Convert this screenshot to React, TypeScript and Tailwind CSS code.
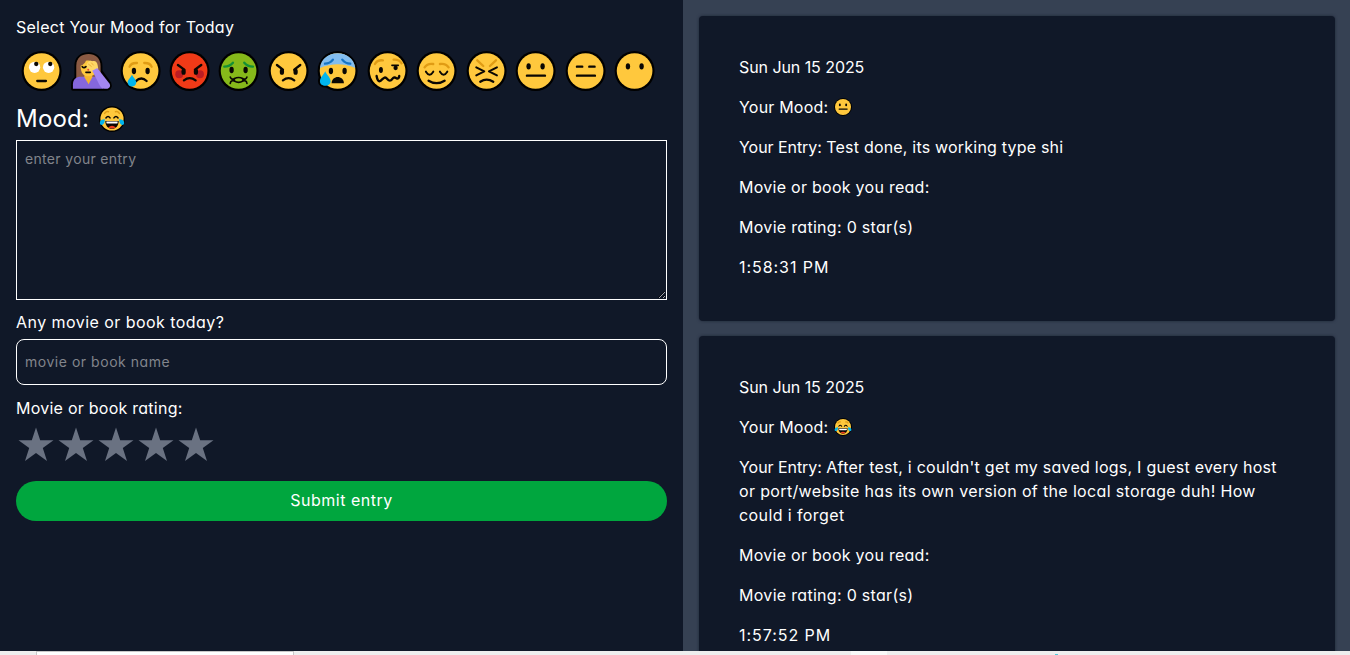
import { type ReactNode } from "react";

const INK = "#0a0703";
const BROW = "#e09c14";

function Face({ fill = "#ffc83d", children }: { fill?: string; children?: ReactNode }) {
  return (
    <>
      <circle cx="60" cy="60" r="60" fill="#000" />
      <circle cx="60" cy="60" r="53.5" fill={fill} />
      <g strokeLinecap="round" strokeLinejoin="round" fill="none" strokeWidth="7" stroke={INK}>
        {children}
      </g>
    </>
  );
}

function Eyes({ y, l = 40, r = 81 }: { y: number; l?: number; r?: number }) {
  return (
    <g fill={INK} stroke="none">
      <ellipse cx={l} cy={y} rx="6.5" ry="9.5" />
      <ellipse cx={r} cy={y} rx="6.5" ry="9.5" />
    </g>
  );
}

const drawings: Record<string, ReactNode> = {
  "rolling eyes": (
    <Face>
      <g stroke="none">
        <circle cx="39" cy="49" r="17" fill="#fff" />
        <circle cx="81" cy="49" r="17" fill="#fff" />
        <circle cx="44" cy="39" r="6.5" fill={INK} />
        <circle cx="86" cy="39" r="6.5" fill={INK} />
      </g>
      <path d="M47 90H73" strokeWidth="7" />
    </Face>
  ),
  facepalm: (
    <>
      <path
        d="M17 82V44C17 20 34 9 54 9S90 22 90 45V60L117 98C121 107 115 114 107 114H7V100C7 90 11 85 17 82Z"
        fill="#000"
        stroke="#000"
        strokeWidth="11"
        strokeLinejoin="round"
      />
      <path d="M17 82V44C17 20 34 9 54 9S90 22 90 45V86H17Z" fill="#8b5a43" />
      <path d="M7 113V100C7 85 17 77 30 77H76C90 77 98 86 98 100V113Z" fill="#8567dc" />
      <path d="M43 66H65V79L54 100L41 78Z" fill="#f5b52e" />
      <path d="M30 44C38 41 43 36 46 29C64 26 78 34 78 52C78 69 67 76 54 76S30 68 30 44Z" fill="#ffc83d" />
      <path d="M48 41C52 29 60 27 66 31C74 28 80 34 81 42L83 53L69 63C55 60 47 52 48 41Z" fill="#ffd766" />
      <path d="M65 59L80 51L117 98C121 106 116 113 108 113H102C96 113 91 109 88 104Z" fill="#a486f2" />
      <path d="M35 47Q40 53 46 47M46 64H59" fill="none" stroke={INK} strokeWidth="5" strokeLinecap="round" />
      <path d="M53 39L63 47M62 35L69 43" stroke="#eaa52f" strokeWidth="2.5" />
      <circle cx="53" cy="56" r="3" fill="#e6453b" />
    </>
  ),
  crying: (
    <Face>
      <path d="M27 47Q32 35 49 36M93 47Q88 35 71 36" stroke={BROW} />
      <Eyes y={60} />
      <path d="M45 91Q62 75 78 90" />
      <path d="M34 71C29 81 21 87 21 94C21 111 47 111 47 94C47 87 39 80 34 71Z" fill="#00b5ee" stroke="none" />
    </Face>
  ),
  furious: (
    <Face fill="#f03a17">
      <g fill="#bb1d23" stroke="none">
        <circle cx="29" cy="70" r="12" />
        <circle cx="91" cy="70" r="12" />
      </g>
      <path d="M25 42L44 56M95 42L76 56M43 88Q60 75 78 88" />
      <Eyes y={62} l={42} r={79} />
    </Face>
  ),
  nauseated: (
    <Face fill="#86b91a">
      <path d="M17 47Q34 46 43 35M103 47Q86 46 77 35" stroke="#139035" />
      <Eyes y={57} l={39} />
      <path
        d="M35 78Q38 87 47 83Q60 76 73 83Q82 87 85 78M35 97Q37 87 47 90Q60 98 73 90Q83 87 85 97M47 83V90M73 83V90"
        strokeWidth="5"
      />
    </Face>
  ),
  angry: (
    <Face>
      <path d="M25 42L43 56M95 42L77 56M43 88Q60 75 77 88" />
      <Eyes y={62} />
    </Face>
  ),
  anxious: (
    <>
      <path d="M23 52C17 67 4 76 4 91C4 112 42 112 42 91C42 76 29 67 23 52Z" fill="#000" stroke="#000" strokeWidth="6" />
      <Face>
        <path d="M7 51C10 23 33 6.500 60 6.500S110 23 113 51Q61 29 7 51Z" fill="#83bdee" stroke="none" />
        <path d="M22 38Q37 38 46 26M98 38Q83 38 74 26" stroke="#1674c4" />
        <Eyes y={60} />
        <path d="M42 97C43 72 78 72 79 97Z" fill={INK} stroke="none" />
        <path d="M23 61C17 73 7 80 7 91C7 109 39 109 39 91C39 80 28 73 23 61Z" fill="#00b5ee" stroke="none" />
      </Face>
    </>
  ),
  woozy: (
    <Face>
      <path d="M22 39Q29 26 46 28M78 26Q94 24 102 37" stroke={BROW} />
      <ellipse cx="40" cy="57" rx="6" ry="9" fill={INK} stroke="none" />
      <path d="M73 43H92" strokeWidth="5" />
      <circle cx="84" cy="51" r="6.500" fill={INK} stroke="none" />
      <path d="M27 75Q30 94 38 90C47 83 51 74 59 84Q67 94 74 84Q79 76 87 82Q94 84 95 75" />
    </Face>
  ),
  relieved: (
    <Face>
      <path d="M24 49Q33 36 50 39M96 49Q87 36 70 39" stroke={BROW} />
      <path d="M28 62Q39 80 50 62M70 62Q81 80 92 62" strokeWidth="6" />
      <path d="M36 89Q60 104 84 89" />
    </Face>
  ),
  persevering: (
    <Face>
      <path d="M32 28L50 45M88 28L70 45" stroke={BROW} />
      <path d="M29 49L53 61L29 73M91 49L67 61L91 73" strokeWidth="6" />
      <path d="M41 92Q60 80 80 92" />
    </Face>
  ),
  neutral: (
    <Face>
      <Eyes y={46} l={39} />
      <path d="M34 74H88" />
    </Face>
  ),
  expressionless: (
    <Face>
      <path d="M34 47H50M71 47H87M34 74H88" />
    </Face>
  ),
  speechless: (
    <Face>
      <Eyes y={46} />
    </Face>
  ),
  joy: (
    <Face>
      <path d="M26 34Q33 24 44 26M94 34Q87 24 76 26" stroke={BROW} />
      <path d="M32 55Q42 42 51 55M69 55Q78 42 88 55" strokeWidth="7" />
      <g stroke="none">
        <path d="M29 69H91C90 91 79 105 60 105S30 91 29 69Z" fill={INK} />
        <path d="M34 71H86V77Q85 81 81 81H39Q35 81 34 77Z" fill="#fff" />
        <path d="M42 99Q60 83 78 99Q60 109 42 99Z" fill="#ee3d1c" />
        <path d="M27 61C12 61 4 67 4 77C4 94 27 91 27 61Z" fill="#00b5ee" />
        <path d="M93 61C108 61 116 67 116 77C116 94 93 91 93 61Z" fill="#00b5ee" />
      </g>
    </Face>
  ),
};

const moods = [
  "rolling eyes",
  "facepalm",
  "crying",
  "furious",
  "nauseated",
  "angry",
  "anxious",
  "woozy",
  "relieved",
  "persevering",
  "neutral",
  "expressionless",
  "speechless",
];

function Emoji({ name, className }: { name: string; className: string }) {
  return (
    <svg viewBox="0 0 120 120" className={`shrink-0 overflow-visible ${className}`} aria-label={name}>
      {drawings[name]}
    </svg>
  );
}

function Star() {
  return (
    <svg viewBox="0 0 40 40" className="size-10" fill="#6a7282">
      <path d="M20 2.500L24.200 15.200H37.500L26.800 23.100L31 36L20 28.100L9 36L13.200 23.100L2.500 15.200H15.800Z" />
    </svg>
  );
}

interface Line {
  text: string;
  tracking: string;
}

interface Entry {
  mood: string;
  lines: Line[];
  time: string;
}

const entries: Entry[] = [
  {
    mood: "neutral",
    lines: [{ text: "Test done, its working type shi", tracking: "tracking-[0.2px]" }],
    time: "1:58:31 PM",
  },
  {
    mood: "joy",
    lines: [
      {
        text: "After test, i couldn't get my saved logs, I guest every host",
        tracking: "tracking-[0.25px]",
      },
      {
        text: "or port/website has its own version of the local storage duh! How",
        tracking: "tracking-[0.35px]",
      },
      { text: "could i forget", tracking: "tracking-[0.4px]" },
    ],
    time: "1:57:52 PM",
  },
];

function EntryCard({ entry }: { entry: Entry }) {
  return (
    <article className="flex shrink-0 flex-col gap-4 rounded bg-[#101828] px-10 pt-[39px] pb-[42px] whitespace-nowrap shadow-[0_0_3px_0_rgba(16,24,40,0.7)]">
      <p className="tracking-[-0.07px]">Sun Jun 15 2025</p>
      <p className="flex items-center">
        Your Mood: <Emoji name={entry.mood} className="ml-1.5 size-[18px]" />
      </p>
      <p>
        <span className="tracking-[-0.05px]">Your Entry: </span>
        {entry.lines.map((line, i) => (
          <span key={line.text} className={line.tracking}>
            {i > 0 && <br />}
            {line.text}
          </span>
        ))}
      </p>
      <p className="tracking-[0.27px]">Movie or book you read:</p>
      <p className="tracking-[0.3px]">Movie rating: 0 star(s)</p>
      <p className="tracking-[0.95px]">{entry.time}</p>
    </article>
  );
}

export default function App() {
  return (
    <div className="flex h-[655px] flex-col overflow-hidden bg-[#101828] font-['Inter',sans-serif] text-base tracking-[0.2px] text-white [font-feature-settings:'cv11']">
      <div className="flex min-h-0 flex-1">
        <main className="flex w-[683px] shrink-0 flex-col px-4 pt-4">
          <h2 className="-mt-px leading-6 tracking-[0.25px]">Select Your Mood for Today</h2>
          <div className="flex h-[63px] items-center pt-px">
            {moods.map((m) => (
              <button key={m} className="flex w-[49.44px] translate-x-[0.6px] justify-center">
                <Emoji name={m} className="size-10" />
              </button>
            ))}
          </div>
          <div className="flex h-[38px] items-center pb-1 text-2xl">
            Mood: <Emoji name="joy" className="ml-2.5 size-[26px]" />
          </div>
          <textarea
            placeholder="enter your entry"
            className="block h-40 w-full shrink-0 resize border border-white p-2 text-sm tracking-[0.33px] outline-none placeholder:text-[#82858c]"
          />
          <label className="mt-2.5 leading-6 tracking-[0.45px]">Any movie or book today?</label>
          <input
            placeholder="movie or book name"
            className="mt-[5px] h-[46px] w-full rounded-lg border border-white px-2 pb-0.5 text-sm tracking-[0.53px] outline-none placeholder:text-[#82858c]"
          />
          <span className="mt-[11px] leading-6 tracking-[0.25px]">Movie or book rating:</span>
          <div className="mt-[5px] flex h-10">
            {[1, 2, 3, 4, 5].map((n) => (
              <Star key={n} />
            ))}
          </div>
          <button className="mt-4 h-10 w-full rounded-full bg-[#00a63e] pb-0.5 tracking-[0.5px]">
            Submit entry
          </button>
        </main>
        <section className="flex min-w-0 flex-1 flex-col gap-[15px] overflow-hidden bg-[#364153] p-4 pr-[15px]">
          {entries.map((e) => (
            <EntryCard key={e.time} entry={e} />
          ))}
        </section>
      </div>
      <footer className="flex h-1 shrink-0 bg-[#eeeeee]">
        <div className="ml-9 w-[258px] border border-b-0 border-[#c8c8c8] bg-white" />
        <div className="ml-[557px] w-9 bg-[#f9f9f9]" />
        <div className="mt-[3px] ml-[168px] w-[3px] bg-[#55cbdc]" />
      </footer>
    </div>
  );
}
